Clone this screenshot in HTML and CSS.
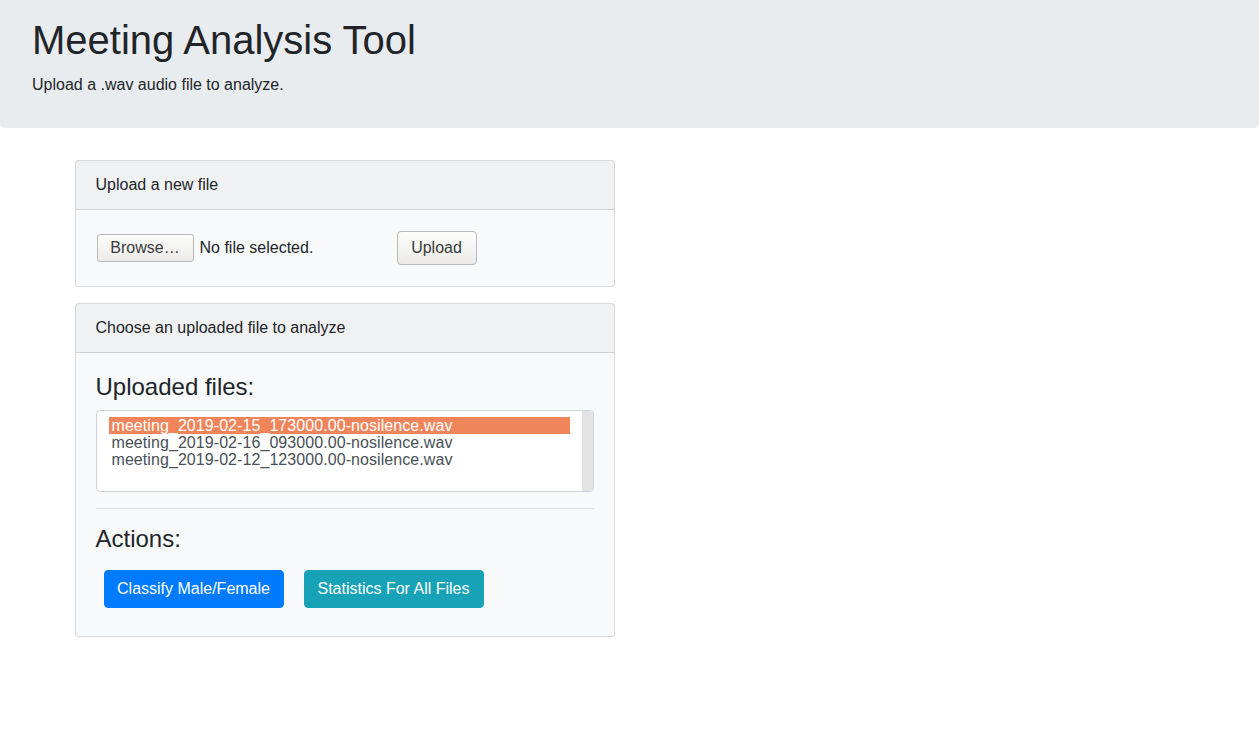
FILE: index.html
```html
<!DOCTYPE html>
<html lang="en">
<head>
<meta charset="utf-8">
<title>Meeting Analysis Tool</title>
<link rel="stylesheet" href="styles.css">
</head>
<body>
<header class="jumbotron">
  <h1 class="title">Meeting Analysis Tool</h1>
  <p class="lead-text">Upload a .wav audio file to analyze.</p>
</header>
<main class="container">
  <div class="col">
    <section class="card">
      <div class="card-header">Upload a new file</div>
      <div class="card-body">
        <form class="upload-form">
          <div class="file-input">
            <span class="native-btn browse">Browse…</span>
            <span class="file-status">No file selected.</span>
          </div>
          <span class="native-btn upload">Upload</span>
        </form>
      </div>
    </section>
    <section class="card">
      <div class="card-header">Choose an uploaded file to analyze</div>
      <div class="card-body">
        <h4 class="section-title">Uploaded files:</h4>
        <div class="file-list">
          <ul class="options">
            <li class="option selected">meeting_2019-02-15_173000.00-nosilence.wav</li>
            <li class="option">meeting_2019-02-16_093000.00-nosilence.wav</li>
            <li class="option">meeting_2019-02-12_123000.00-nosilence.wav</li>
          </ul>
          <div class="scroll-track"></div>
        </div>
        <hr class="divider">
        <h4 class="section-title">Actions:</h4>
        <div class="actions">
          <button class="btn btn-primary" type="button">Classify Male/Female</button>
          <button class="btn btn-info" type="button">Statistics For All Files</button>
        </div>
      </div>
    </section>
  </div>
</main>
</body>
</html>
```
FILE: styles.css
```css
* { box-sizing: border-box; }

body {
  margin: 0;
  font-family: "Liberation Sans", Arial, sans-serif;
  font-size: 16px;
  line-height: 1.5;
  color: #212529;
  background: #fff;
}

.jumbotron {
  background: #e9ecef;
  padding: 16px 32px 16px;
  margin-bottom: 32px;
  border-radius: 0 0 5px 5px;
}

.title {
  margin: 0 0 9px;
  font-size: 40px;
  font-weight: 400;
  line-height: 1.2;
}

.lead-text {
  margin: 0 0 15px;
  font-size: 16px;
}

.container {
  width: 1140px;
  margin: 0 auto;
  padding: 0 15px;
}

.col {
  width: 540px;
}

.card {
  background: #f8f9fa;
  border: 1px solid rgba(0,0,0,.125);
  border-radius: 4px;
  margin-bottom: 16px;
}

.card:last-child {
  margin-bottom: 0;
}

.card-header {
  padding: 12px 20px;
  background: rgba(0,0,0,.03);
  border-bottom: 1px solid rgba(0,0,0,.125);
  font-size: 16px;
  line-height: 24px;
}

.card-body {
  padding: 20px;
}

.upload-form {
  display: flex;
  align-items: center;
  height: 36px;
}

.file-input {
  display: flex;
  align-items: center;
  width: 301px;
}

.native-btn {
  display: inline-flex;
  align-items: center;
  justify-content: center;
  border: 1px solid #b8b8b8;
  border-radius: 4px;
  background: linear-gradient(#fcfcfb, #ecebea);
  color: #3b3b3b;
  font-size: 16px;
}

.browse {
  width: 97px;
  height: 28px;
  margin-left: 1px;
  border-radius: 3px;
}

.file-status {
  margin-left: 6px;
  color: #212529;
}

.upload {
  width: 80px;
  height: 34px;
}

.section-title {
  margin: 0 0 8px;
  font-size: 24px;
  font-weight: 400;
  line-height: 1.2;
}

.file-list {
  display: flex;
  height: 82px;
  background: #fff;
  border: 1px solid #ced4da;
  border-radius: 4px;
  overflow: hidden;
}

.options {
  flex: 1;
  list-style: none;
  margin: 0;
  padding: 6px 12px;
}

.option {
  padding-left: 3px;
  height: 17px;
  line-height: 17px;
  font-size: 16px;
  letter-spacing: 0.07px;
  color: #495057;
  white-space: nowrap;
}

.option.selected {
  background: #f0855c;
  color: #fff;
}

.scroll-track {
  width: 11px;
  background: #e3e3e3;
}

.divider {
  margin: 16px 0;
  border: 0;
  border-top: 1px solid rgba(0,0,0,.1);
}

.actions {
  font-size: 0;
}

.btn {
  display: inline-block;
  margin: 8px;
  padding: 6px 12px;
  border: 1px solid transparent;
  border-radius: 4px;
  font-family: inherit;
  font-size: 16px;
  line-height: 24px;
  color: #fff;
  width: 180px;
}

.btn + .btn {
  margin-left: 12px;
}

.btn-primary {
  background: #007bff;
  border-color: #007bff;
}

.btn-info {
  background: #17a2b8;
  border-color: #17a2b8;
}
```
